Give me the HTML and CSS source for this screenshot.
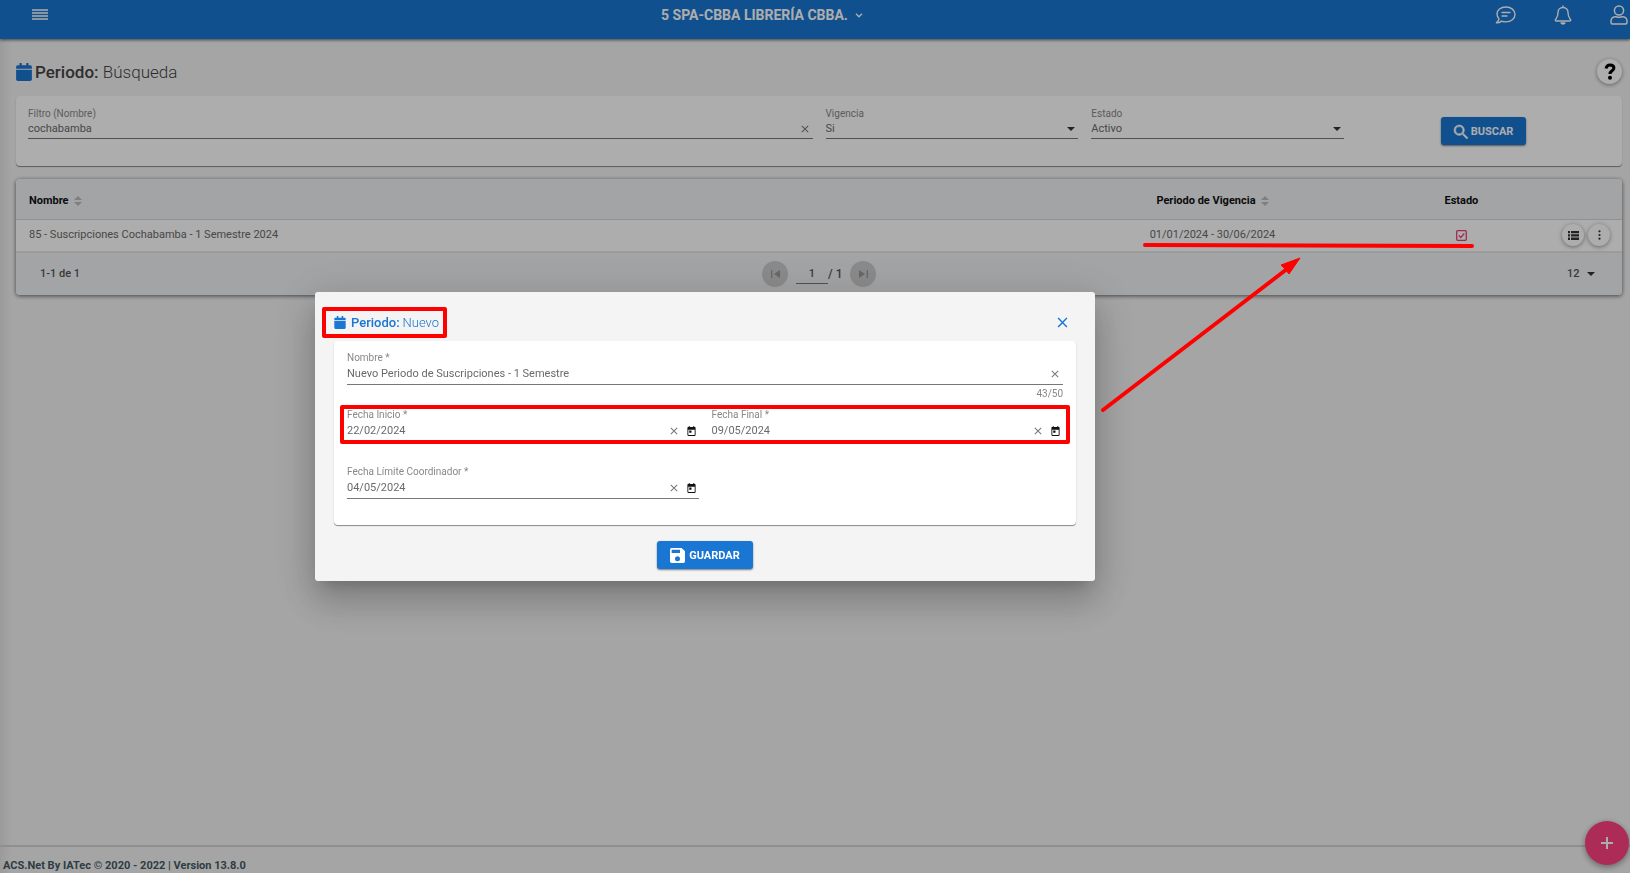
FILE: index.html
```html
<!DOCTYPE html>
<html lang="es">
<head>
<meta charset="utf-8">
<title>Periodo: Búsqueda</title>
<meta name="viewport" content="width=device-width, initial-scale=1">
<link rel="stylesheet" href="styles.css">
</head>
<body>
<svg class="defs" width="0" height="0" aria-hidden="true">
  <symbol id="i-calendar" viewBox="0 0 448 512"><path d="M0 192h448v272c0 26-21 48-48 48H48c-27 0-48-22-48-48zM448 164v-52c0-27-21-48-48-48h-48V12c0-7-5-12-12-12h-40c-7 0-12 5-12 12v52H160V12c0-7-5-12-12-12h-40c-7 0-12 5-12 12v52H48c-27 0-48 21-48 48v52z"/></symbol>
  <symbol id="i-close" viewBox="0 0 10 10"><path d="M1 1l8 8M9 1l-8 8" fill="none" stroke="currentColor" stroke-width="1.3"/></symbol>
  <symbol id="i-sort" viewBox="0 0 8 10"><path d="M4 0l4 4H0zM4 10l4-4H0z"/></symbol>
  <symbol id="i-caret" viewBox="0 0 8 4"><path d="M0 0h8L4 4z"/></symbol>
  <symbol id="i-day" viewBox="3 1 18 22"><path d="M19 3h-1V1h-2v2H8V1H6v2H5c-1.100 0-2 .9-2 2v16c0 1.100.9 2 2 2h14c1.100 0 2-.9 2-2V5c0-1.100-.9-2-2-2zm0 18H5V9h14zM7 11h5v5H7z"/></symbol>
</svg>

<header class="topbar">
  <button class="icon-button" type="button" aria-label="Menú"><svg width="16" height="12" viewBox="0 0 16 12"><path d="M0 1h16M0 4h16M0 7h16M0 10h16" stroke="currentColor" stroke-width="1.500"/></svg></button>
  <button class="company" type="button">5 SPA-CBBA LIBRERÍA CBBA.<svg width="8" height="5" viewBox="0 0 8 5"><path d="M1 .7l3 3 3-3" fill="none" stroke="currentColor" stroke-width="1.400"/></svg></button>
  <nav class="tools" aria-label="Cuenta">
    <button class="icon-button" type="button" aria-label="Mensajes"><svg width="21" height="18" viewBox="0 0 21 18" fill="none" stroke="currentColor" stroke-width="1.400" stroke-linecap="round" stroke-linejoin="round"><path d="M11 1C5.500 1 2 4.200 2 8c0 1.900.8 3.600 2 4.900-.3 1.500-1.300 2.800-2.600 3.900 2.200 0 4-.7 5.200-1.700 1.300.5 2.800.8 4.400.8 5 0 9-3.300 9-7.500S16 1 11 1zM7 6.500h8M7 10h5"/></svg></button>
    <button class="icon-button" type="button" aria-label="Notificaciones"><svg width="18" height="20" viewBox="0 0 18 20" fill="none" stroke="currentColor" stroke-width="1.400" stroke-linecap="round" stroke-linejoin="round"><path d="M9 1v1.500M9 2.500c-3.200 0-5 2.300-5 5 0 4.500-1.400 5.700-2.500 7-.4.600-.1 1.500.8 1.500h13.400c.9 0 1.200-.9.800-1.500-1.100-1.300-2.500-2.500-2.500-7 0-2.700-1.800-5-5-5z"/><path d="M7 18c.8 1.300 3.200 1.300 4 0z" fill="currentColor"/></svg></button>
    <button class="icon-button" type="button" aria-label="Usuario"><svg width="18" height="20" viewBox="0 0 18 20" fill="none" stroke="currentColor" stroke-width="1.500" stroke-linejoin="round"><circle cx="9" cy="5.500" r="4.600"/><path d="M5.500 11.700C3 11.700 1 13.500 1 16v1.500c0 .9.700 1.500 1.500 1.500h13c.8 0 1.500-.6 1.500-1.500V16c0-2.500-2-4.300-4.500-4.300-1 0-1.800.6-3.500.6s-2.500-.6-3.500-.6z"/></svg></button>
  </nav>
</header>

<main class="page">
  <div class="page-head">
    <svg class="blue" width="16" height="18"><use href="#i-calendar"/></svg>
    <h1>Periodo: <span>Búsqueda</span></h1>
    <button class="round help" type="button" aria-label="Ayuda"><svg width="12" height="17" viewBox="0 0 12 17"><path d="M2 5.500C2.500 3 4 2 6 2c2.300 0 3.900 1.300 3.900 3.100C9.900 8 6 7.700 6 11" fill="none" stroke="currentColor" stroke-width="3"/><circle cx="6" cy="14.800" r="2"/></svg></button>
  </div>

  <form class="card filters">
    <div class="field wide">
      <label for="filtro">Filtro (Nombre)</label>
      <div class="control"><input id="filtro" type="text" value="cochabamba"><button class="clear" type="button" aria-label="Limpiar"><svg width="8" height="8"><use href="#i-close"/></svg></button></div>
    </div>
    <div class="field">
      <label for="vigencia">Vigencia</label>
      <div class="control"><select id="vigencia"><option>Si</option><option>No</option></select><svg class="caret" width="8" height="4"><use href="#i-caret"/></svg></div>
    </div>
    <div class="field">
      <label for="estado">Estado</label>
      <div class="control"><select id="estado"><option>Activo</option><option>Inactivo</option></select><svg class="caret" width="8" height="4"><use href="#i-caret"/></svg></div>
    </div>
    <div class="filter-action">
      <button class="primary" type="button"><svg width="14" height="14" viewBox="3 3 17.500 17.500" stroke="currentColor" stroke-width=".6"><path d="M15.500 14h-.8l-.3-.3A6.500 6.500 0 1 0 13.700 14.400l.3.300v.8l5 5 1.500-1.500zm-6 0a4.500 4.500 0 1 1 0-9 4.500 4.500 0 0 1 0 9z"/></svg>BUSCAR</button>
    </div>
  </form>

  <section class="card results">
    <table>
      <thead>
        <tr><th class="col-name" scope="col">Nombre<svg class="sort" width="8" height="10"><use href="#i-sort"/></svg></th><th class="col-dates" scope="col">Periodo de Vigencia<svg class="sort" width="8" height="10"><use href="#i-sort"/></svg></th><th class="col-state" scope="col">Estado</th><td class="col-actions"></td></tr>
      </thead>
      <tbody>
        <tr>
          <td class="col-name">85 - Suscripciones Cochabamba - 1 Semestre 2024</td>
          <td>01/01/2024 - 30/06/2024</td>
          <td><svg class="check" width="11" height="11" viewBox="0 0 11 11" fill="none" stroke="currentColor" stroke-width="1.300" role="img" aria-label="Activo"><rect x=".7" y=".7" width="9.600" height="9.600" rx="1"/><path d="M2.800 5.500l2 2 3.500-4"/></svg></td>
          <td><div class="actions">
            <button class="round" type="button" aria-label="Detalles"><svg width="11" height="9" viewBox="0 0 11 9"><path d="M0 0h2v2.300H0zM3 0h8v2.300H3zM0 3.300h2v2.300H0zM3 3.300h8v2.300H3zM0 6.600h2v2.300H0zM3 6.600h8v2.300H3z"/></svg></button>
            <button class="round" type="button" aria-label="Más opciones"><svg width="3" height="10" viewBox="0 0 3 10"><circle cx="1.500" cy="1.300" r="1.100"/><circle cx="1.500" cy="5" r="1.100"/><circle cx="1.500" cy="8.700" r="1.100"/></svg></button>
          </div></td>
        </tr>
      </tbody>
    </table>
    <div class="table-foot">
      <span class="range">1-1 de 1</span>
      <div class="pager">
        <button type="button" disabled aria-label="Primera página"><svg width="9" height="8" viewBox="0 0 9 8"><path d="M0 0h1.300v8H0zM9 0v8L3 4z"/></svg></button>
        <div class="page-number"><input type="text" value="1" aria-label="Página"><span>/ 1</span></div>
        <button type="button" disabled aria-label="Última página"><svg width="9" height="8" viewBox="0 0 9 8"><path d="M9 0H7.700v8H9zM0 0v8l6-4z"/></svg></button>
      </div>
      <div class="page-size"><select aria-label="Filas por página"><option>12</option><option>24</option></select><svg class="caret" width="8" height="4"><use href="#i-caret"/></svg></div>
    </div>
  </section>
</main>

<footer class="footer">ACS.Net By IATec © 2020 - 2022 | Version 13.8.0</footer>
<button class="fab" type="button" aria-label="Nuevo periodo"><svg width="12" height="12" viewBox="0 0 12 12"><path d="M6 0v12M0 6h12" stroke="currentColor" stroke-width="2"/></svg></button>

<div class="backdrop">
  <form class="modal" role="dialog" aria-labelledby="modal-title">
    <div class="modal-head">
      <h2 id="modal-title"><svg width="12" height="13"><use href="#i-calendar"/></svg><b>Periodo:</b> <span>Nuevo</span></h2>
      <button class="close" type="button" aria-label="Cerrar"><svg width="11" height="11"><use href="#i-close"/></svg></button>
      <div class="mark mark-title"></div>
    </div>
    <div class="card modal-body">
      <div class="field wide">
        <label for="nombre">Nombre *</label>
        <div class="control"><input id="nombre" type="text" value="Nuevo Periodo de Suscripciones - 1 Semestre"><button class="clear" type="button" aria-label="Limpiar"><svg width="8" height="8"><use href="#i-close"/></svg></button></div>
        <div class="hint">43/50</div>
      </div>
      <div class="field">
        <label for="inicio">Fecha Inicio *</label>
        <div class="control"><input id="inicio" type="text" value="22/02/2024"><button class="clear" type="button" aria-label="Limpiar"><svg width="8" height="8"><use href="#i-close"/></svg></button><button class="day" type="button" aria-label="Calendario"><svg width="9" height="10"><use href="#i-day"/></svg></button></div>
        <div class="hint"></div>
      </div>
      <div class="field">
        <label for="final">Fecha Final *</label>
        <div class="control"><input id="final" type="text" value="09/05/2024"><button class="clear" type="button" aria-label="Limpiar"><svg width="8" height="8"><use href="#i-close"/></svg></button><button class="day" type="button" aria-label="Calendario"><svg width="9" height="10"><use href="#i-day"/></svg></button></div>
        <div class="hint"></div>
      </div>
      <div class="field">
        <label for="limite">Fecha Límite Coordinador *</label>
        <div class="control"><input id="limite" type="text" value="04/05/2024"><button class="clear" type="button" aria-label="Limpiar"><svg width="8" height="8"><use href="#i-close"/></svg></button><button class="day" type="button" aria-label="Calendario"><svg width="9" height="10"><use href="#i-day"/></svg></button></div>
        <div class="hint"></div>
      </div>
      <div class="mark mark-dates"></div>
    </div>
    <div class="modal-foot">
      <button class="primary save" type="button"><svg width="15" height="15" viewBox="3 3 18 18"><path d="M17 3H5a2 2 0 0 0-2 2v14c0 1.100.9 2 2 2h14a2 2 0 0 0 2-2V7zm-5 16a3 3 0 1 1 0-6 3 3 0 0 1 0 6zm3-10H5V5h10z"/></svg>GUARDAR</button>
    </div>
  </form>
</div>

<svg class="arrow" width="340" height="180" viewBox="0 0 340 180" aria-hidden="true">
  <path d="M8 5l327 1" stroke="#f00" stroke-width="4" stroke-linecap="round"/>
  <path d="M-34 170L150 29" stroke="#f00" stroke-width="4" stroke-linecap="round"/>
  <path d="M163 18l-19 7 4 4 4 5z" fill="#f00" stroke="#f00"/>
</svg>
</body>
</html>
```
FILE: styles.css
```css
* { box-sizing: border-box; }

body {
  margin: 0;
  min-height: 100vh;
  display: flex;
  flex-direction: column;
  overflow: hidden;
  background: linear-gradient(90deg, #e4e4e4, #f4f4f4 12px);
  color: #6a6a6a;
  font: 11px/16px Roboto, "Liberation Sans", sans-serif;
}

svg { display: block; flex: none; overflow: visible; }
svg:not([fill]) { fill: currentColor; }
.defs { position: absolute; }

button, input, select { font: inherit; color: inherit; }
button {
  display: inline-flex;
  align-items: center;
  justify-content: center;
  padding: 0;
  border: 0;
  background: none;
}
input, select {
  flex: 1;
  min-width: 0;
  padding: 0;
  border: 0;
  outline: 0;
  background: none;
  appearance: none;
}

.topbar {
  display: grid;
  grid-template-columns: 1fr auto 1fr;
  align-items: start;
  height: 39px;
  padding: 0 2px 0 32px;
  background: #1976d2;
  color: #fff;
  box-shadow: 0 1px 3px rgba(0, 0, 0, .6);
}
.topbar .icon-button { height: 30px; justify-self: start; }
.company {
  gap: 7px;
  height: 30px;
  margin-right: 136px;
  font-size: 14px;
  font-weight: 700;
}
.tools { display: flex; justify-content: flex-end; gap: 38px; }

.page { flex: 1; padding: 0 8px 0 16px; }
.page-head { display: flex; align-items: center; gap: 3px; height: 57px; padding-top: 8px; }
.blue { color: #1976d2; }
h1 { margin: 0; flex: 1; font-size: 17px; line-height: 24px; font-weight: 500; color: #444; }
h1 span { font-weight: 300; }

.round {
  width: 22px;
  height: 22px;
  border-radius: 50%;
  background: #fff;
  color: #333;
  box-shadow: 0 1px 4px rgba(0, 0, 0, .4);
}
.help { width: 25px; height: 25px; color: #000; }

.card {
  position: relative;
  border-radius: 4px;
  background: #fff;
  box-shadow: 0 1px 1px rgba(0, 0, 0, .45);
}
.filters, .modal-body {
  display: grid;
  grid-template-columns: repeat(12, minmax(0, 1fr));
  column-gap: 13px;
}
.filters { padding: 11px 12px 27px; }
.filters .field, .filter-action { grid-column: span 2; }
.filters .wide { grid-column: span 6; }
.filter-action { display: flex; justify-content: center; padding-top: 10px; height: 32px; }

.field label { display: block; height: 12px; font-size: 10px; line-height: 14px; color: #888; }
.control {
  display: flex;
  align-items: center;
  height: 20px;
  border-bottom: 1px solid #777;
}
.clear { width: 16px; height: 16px; color: #777; }
.caret { margin-right: 3px; color: #333; }

.primary {
  gap: 3px;
  height: 28px;
  padding: 1px 13px 0;
  border-radius: 3px;
  background: #1976d2;
  color: #fff;
  font-weight: 700;
  box-shadow: 0 1px 2px rgba(0, 0, 0, .5);
}

.results { margin-top: 13px; box-shadow: 0 1px 4px rgba(0, 0, 0, .6); overflow: hidden; }
table { width: 100%; border-collapse: collapse; table-layout: fixed; text-align: center; }
th, td { padding: 0; }
thead { background: #f0f2f5; color: #111; }
thead tr { height: 40px; border-bottom: 1px solid #d5d5d5; }
tbody tr { height: 32px; }
th { padding-top: 5px; font-weight: 700; }
.col-name { padding-left: 13px; text-align: left; }
.col-dates { width: 23%; }
.col-state { width: 8%; }
.col-actions { width: 6%; }
.sort { display: inline-block; margin-left: 5px; vertical-align: -2px; color: #bbb; }
.check { display: inline-block; vertical-align: middle; color: #e8407a; }
.actions { display: flex; justify-content: flex-end; gap: 4px; padding-right: 12px; }
.table-foot {
  display: grid;
  grid-template-columns: 1fr auto 1fr;
  align-items: center;
  height: 44px;
  padding: 0 24px;
  border-top: 2px solid #e3e5e8;
  background: #f0f2f5;
  color: #555;
  font-weight: 500;
}
.pager { display: flex; gap: 8px; }
.pager button { width: 26px; height: 26px; border-radius: 50%; background: #ccc; color: #999; }
.page-number { display: flex; align-items: center; font-size: 12px; }
.page-number input { flex: none; width: 32px; height: 20px; border-bottom: 1px solid #777; text-align: center; font-size: 11px; }
.page-number span { width: 14px; white-space: nowrap; }
.page-size { display: flex; align-items: center; justify-self: end; }
.page-size select { flex: none; width: 20px; }

.footer {
  height: 28px;
  padding: 11px 3px 0;
  border-top: 2px solid #d3d3d3;
  color: #455a64;
  font-weight: 700;
}

.fab {
  position: fixed;
  right: 1px;
  bottom: 8px;
  width: 44px;
  height: 44px;
  border-radius: 50%;
  background: #ff4081;
  color: #fff;
  box-shadow: 0 2px 6px rgba(0, 0, 0, .4);
}

.backdrop {
  position: fixed;
  inset: 0;
  display: grid;
  place-items: center;
  padding-right: 220px;
  background: rgba(0, 0, 0, .32);
}
.modal {
  width: 780px;
  max-width: 100%;
  padding: 0 19px 12px;
  border-radius: 3px;
  background: #f4f4f4;
  box-shadow: 0 10px 15px -7px rgba(0, 0, 0, .2), 0 22px 36px 3px rgba(0, 0, 0, .14), 0 8px 44px 8px rgba(0, 0, 0, .12);
}
.modal-head {
  position: relative;
  display: flex;
  align-items: center;
  justify-content: space-between;
  height: 49px;
  padding: 12px 8px 0 0;
  color: #1976d2;
}
h2 { display: flex; align-items: center; gap: 3px; margin: 0; font-size: 13px; line-height: 20px; font-weight: 300; }
h2 svg { margin-right: 2px; }
h2 b { font-weight: 500; }
.modal-body { padding: 10px 13px 3px; }
.modal-body .field { grid-column: span 6; }
.modal-body .wide { grid-column: span 12; }
.modal-body .control { height: 22px; }
.day { margin: 0 3px 0 5px; color: #111; }
.hint { height: 23px; text-align: right; font-size: 10px; line-height: 18px; color: #888; }
.modal-foot { display: flex; justify-content: center; padding-top: 16px; }
.save { gap: 4px; }

.mark { position: absolute; border: 4px solid #f00; border-radius: 2px; pointer-events: none; }
.mark-title { left: -12px; top: 15px; width: 125px; height: 31px; }
.mark-dates { left: 6px; right: 6px; top: 64px; height: 39px; }
.arrow { position: absolute; left: 1137px; top: 240px; pointer-events: none; }
```
